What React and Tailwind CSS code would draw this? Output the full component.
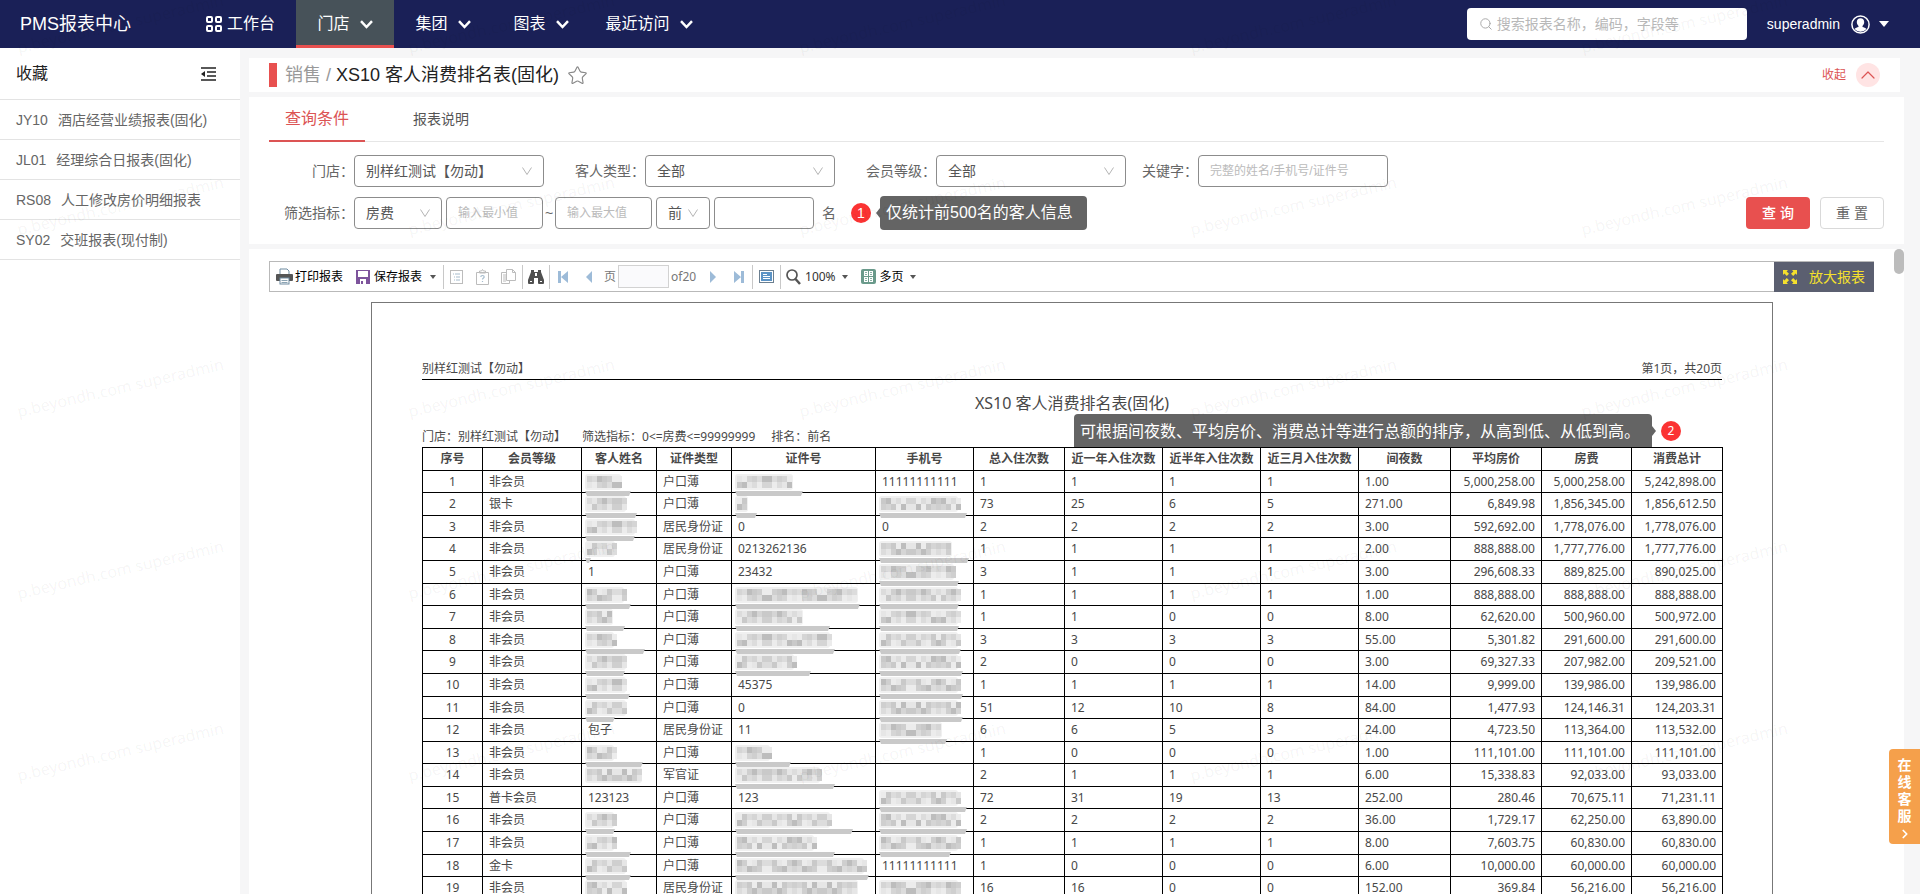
import { useState } from 'react';
import { ChevronDown, ChevronUp, Search, Star } from 'lucide-react';

const navItems = [
  { label: '门店', width: 'w-[98px]' },
  { label: '集团', width: 'w-[98px]' },
  { label: '图表', width: 'w-[98px]' },
  { label: '最近访问', width: 'w-[118px]' },
];

const favorites = [
  { code: 'JY10', name: '酒店经营业绩报表(固化)' },
  { code: 'JL01', name: '经理综合日报表(固化)' },
  { code: 'RS08', name: '人工修改房价明细报表' },
  { code: 'SY02', name: '交班报表(现付制)' },
];

const columns = [
  { title: '序号', width: 'w-[60px]', align: 'text-center' },
  { title: '会员等级', width: 'w-[99px]', align: 'text-left' },
  { title: '客人姓名', width: 'w-[75px]', align: 'text-left' },
  { title: '证件类型', width: 'w-[75px]', align: 'text-left' },
  { title: '证件号', width: 'w-[144px]', align: 'text-left' },
  { title: '手机号', width: 'w-[98px]', align: 'text-left' },
  { title: '总入住次数', width: 'w-[91px]', align: 'text-left' },
  { title: '近一年入住次数', width: 'w-[98px]', align: 'text-left' },
  { title: '近半年入住次数', width: 'w-[98px]', align: 'text-left' },
  { title: '近三月入住次数', width: 'w-[98px]', align: 'text-left' },
  { title: '间夜数', width: 'w-[92px]', align: 'text-left' },
  { title: '平均房价', width: 'w-[91px]', align: 'text-right' },
  { title: '房费', width: 'w-[90px]', align: 'text-right' },
  { title: '消费总计', width: 'w-[91px]', align: 'text-right' },
];

// [blurred text width, smear width] hides private data in a cell
const rows = [
  ['1', '非会员', [33, 46], '户口薄', [55, 68], '11111111111', '1', '1', '1', '1', '1.00', '5,000,258.00', '5,000,258.00', '5,242,898.00'],
  ['2', '银卡', [38, 52], '户口薄', [10, 22], [76, 88], '73', '25', '6', '5', '271.00', '6,849.98', '1,856,345.00', '1,856,612.50'],
  ['3', '非会员', [47, 50], '居民身份证', '0', '0', '2', '2', '2', '2', '3.00', '592,692.00', '1,778,076.00', '1,778,076.00'],
  ['4', '非会员', [27, 6], '居民身份证', '0213262136', [70, 90], '1', '1', '1', '1', '2.00', '888,888.00', '1,777,776.00', '1,777,776.00'],
  ['5', '非会员', '1', '户口薄', '23432', [72, 80], '3', '1', '1', '1', '3.00', '296,608.33', '889,825.00', '890,025.00'],
  ['6', '非会员', [36, 46], '户口薄', [120, 125], [76, 80], '1', '1', '1', '1', '1.00', '888,888.00', '888,888.00', '888,888.00'],
  ['7', '非会员', [25, 40], '户口薄', [65, 95], [76, 80], '1', '1', '0', '0', '8.00', '62,620.00', '500,960.00', '500,972.00'],
  ['8', '非会员', [26, 60], '户口薄', [92, 100], [76, 82], '3', '3', '3', '3', '55.00', '5,301.82', '291,600.00', '291,600.00'],
  ['9', '非会员', [38, 40], '户口薄', [56, 76], [76, 84], '2', '0', '0', '0', '3.00', '69,327.33', '207,982.00', '209,521.00'],
  ['10', '非会员', [38, 45], '户口薄', '45375', [76, 84], '1', '1', '1', '1', '14.00', '9,999.00', '139,986.00', '139,986.00'],
  ['11', '非会员', [38, 30], '户口薄', '0', [76, 84], '51', '12', '10', '8', '84.00', '1,477.93', '124,146.31', '124,203.31'],
  ['12', '非会员', '包子', '居民身份证', '11', [60, 68], '6', '6', '5', '3', '24.00', '4,723.50', '113,364.00', '113,532.00'],
  ['13', '非会员', [26, 58], '户口薄', [32, 56], '', '1', '0', '0', '0', '1.00', '111,101.00', '111,101.00', '111,101.00'],
  ['14', '非会员', [54, 0], '军官证', [82, 100], '', '2', '1', '1', '1', '6.00', '15,338.83', '92,033.00', '93,033.00'],
  ['15', '普卡会员', '123123', '户口薄', '123', [76, 88], '72', '31', '19', '13', '252.00', '280.46', '70,675.11', '71,231.11'],
  ['16', '非会员', [26, 30], '户口薄', [92, 118], [76, 88], '2', '2', '2', '2', '36.00', '1,729.17', '62,250.00', '63,890.00'],
  ['17', '非会员', [26, 46], '户口薄', [76, 100], [76, 72], '1', '1', '1', '1', '8.00', '7,603.75', '60,830.00', '60,830.00'],
  ['18', '金卡', [38, 46], '户口薄', [126, 134], '11111111111', '1', '0', '0', '0', '6.00', '10,000.00', '60,000.00', '60,000.00'],
  ['19', '非会员', [38, 0], '居民身份证', [120, 0], [76, 0], '16', '16', '0', '0', '152.00', '369.84', '56,216.00', '56,216.00'],
];

const shortRows = ['1', '3', '6', '8', '11', '13', '15', '18'];
const greys = ['#c9c9c9', '#e6e6e6', '#d5d5d5', '#bdbdbd', '#ececec', '#dcdcdc', '#cfcfcf'];

function Mosaic({ width, smear, seed }) {
  const blocks = [];
  for (let x = 0; x < width; x += 5) {
    for (let y = 0; y < 2; y++) {
      const n = (x * 7 + y * 13 + seed * 31 + ((x * x) % 11)) % greys.length;
      blocks.push(<rect key={`${x}-${y}`} x={x + 2} y={5 + y * 6} width="5" height="6" fill={greys[n]} />);
    }
  }
  return (
    <svg className="absolute left-[3px] top-0 z-10" width="140" height="26" viewBox="0 0 140 26" aria-hidden="true">
      <rect x="0" y="3" width={width + 3} height="16" rx="3" fill="#f0f0f0" />
      {blocks}
      {smear > 0 && <path d={`M0 20h${smear}l-2 5H2z`} fill="#c9c9c9" />}
    </svg>
  );
}

function SelectBox({ id, label, value, className }) {
  return (
    <span className={`relative inline-flex h-8 ${className}`}>
      <select id={id} aria-label={label} className="h-8 w-full appearance-none rounded border border-[#8c8c8c] bg-white pl-[11px] text-sm text-[#555] outline-none">
        <option>{value}</option>
      </select>
      <svg className="pointer-events-none absolute right-3 top-3 text-[#b4b4b4]" width="10" height="9" viewBox="0 0 10 9" fill="none" stroke="currentColor">
        <path d="M.5.5 5 7.500 9.500.5" />
      </svg>
    </span>
  );
}

function Caret({ className }) {
  return (
    <svg className={className} width="6" height="4" viewBox="0 0 6 4" fill="#555"><path d="M0 0h6L3 4z" /></svg>
  );
}

function Divider({ className }) {
  return <span className={`h-6 w-px shrink-0 bg-[#c8c8c8] ${className}`} />;
}

function Header() {
  const [active, setActive] = useState('门店');
  return (
    <header className="flex h-12 shrink-0 items-center bg-[#1a2057] text-white">
      <h1 className="w-[186px] pl-5 text-lg">PMS报表中心</h1>
      <nav className="flex h-full items-center text-base">
        <a href="#workbench" className="flex w-[110px] items-center gap-[5px] pl-5">
          <svg width="16" height="16" viewBox="0 0 16 16" fill="none" stroke="currentColor" strokeWidth="2">
            <rect x="1" y="1" width="5" height="5" rx="1" />
            <rect x="10" y="1" width="5" height="5" rx="1" />
            <rect x="1" y="10" width="5" height="5" rx="1" />
            <rect x="10" y="10" width="5" height="5" rx="1" />
          </svg>
          工作台
        </a>
        {navItems.map((item) => (
          <button
            key={item.label}
            onClick={() => setActive(item.label)}
            className={`flex h-full items-center justify-center gap-[10px] border-b-[3px] pt-[3px] ${item.width} ${
              active === item.label ? 'border-[#e8504f] bg-[#475259]' : 'border-transparent'
            }`}
          >
            {item.label}
            <svg width="13" height="9" viewBox="0 0 13 9" fill="none" stroke="currentColor" strokeWidth="2.500">
              <path d="M1 1.200 6.500 7 12 1.200" />
            </svg>
          </button>
        ))}
      </nav>
      <div className="ml-auto flex items-center pr-[31px]">
        <label className="flex h-8 w-[280px] items-center gap-1 rounded bg-white pl-3 text-[#aaa]">
          <Search size={14} strokeWidth={1.7} />
          <input aria-label="搜索报表" placeholder="搜索报表名称，编码，字段等" className="flex-1 text-sm outline-none placeholder:text-[#b8b8b8]" />
        </label>
        <button className="ml-5 flex items-center text-sm">
          superadmin
          <svg className="ml-[11px]" width="19" height="19" viewBox="0 0 19 19">
            <circle cx="9.5" cy="9.5" r="8.6" fill="none" stroke="#fff" strokeWidth="1.5" />
            <path d="M9.5 3.2c-2.3 0-3.7 1.7-3.7 3.9 0 1.6.7 3 1.7 3.8v1.2c-1.4.5-3 .9-4 2a8.2 8.2 0 0 0 12 0c-1-1.1-2.6-1.5-4-2v-1.2c1-.8 1.7-2.2 1.7-3.8 0-2.2-1.4-3.9-3.7-3.900z" fill="#fff" />
          </svg>
          <svg className="ml-[9px]" width="10" height="6" viewBox="0 0 10 6" fill="#fff"><path d="M0 0h10L5 6z" /></svg>
        </button>
      </div>
    </header>
  );
}

function Sidebar() {
  return (
    <aside className="w-60 shrink-0 bg-white">
      <div className="flex h-[52px] items-center justify-between border-b border-[#e3e3e3] pl-4 pr-6">
        <h2 className="text-base text-[#222]">收藏</h2>
        <button aria-label="收起收藏">
          <svg width="15" height="14" viewBox="0 0 15 14" fill="none" stroke="#222" strokeWidth="1.500">
            <path d="M0 1h15M6 5h9M6 9h9M0 13h15" />
            <path d="M4 4v6L0 7z" fill="#222" stroke="none" />
          </svg>
        </button>
      </div>
      <ul>
        {favorites.map((item) => (
          <li key={item.code} className="h-10 border-b border-[#e3e3e3]">
            <a href={`#${item.code}`} className="flex h-full items-center gap-[10px] pl-4 text-sm text-[#666]">
              <span>{item.code}</span>
              <span>{item.name}</span>
            </a>
          </li>
        ))}
      </ul>
    </aside>
  );
}

function TitleBar() {
  return (
    <div className="mr-1 flex h-[34px] shrink-0 items-center bg-white px-5">
      <span className="h-6 w-2 bg-[#e8504f]" />
      <div className="ml-2 flex items-center gap-[5px] text-lg text-[#222]">
        <span className="text-[#999]">销售</span>
        <span className="text-[#999]">/</span>
        <span>XS10 客人消费排名表(固化)</span>
      </div>
      <button aria-label="收藏报表" className="ml-2 text-[#888]"><Star size={21} strokeWidth={1.3} strokeLinejoin="miter" /></button>
      <button className="ml-auto flex items-center gap-[10px] text-xs text-[#dc5454]">
        收起
        <span className="flex h-6 w-6 items-center justify-center rounded-full bg-[#ffe4e4]">
          <ChevronUp size={24} strokeWidth={1.2} />
        </span>
      </button>
    </div>
  );
}

function Filters() {
  const field = 'h-8 rounded border border-[#8c8c8c] bg-white pl-[11px] text-xs outline-none placeholder:text-[#bbb]';
  return (
    <section className="shrink-0 bg-white pb-[15px]">
      <div className="mx-5 flex h-[45px] border-b border-[#e6e6e6]" role="tablist">
        <button role="tab" aria-selected="true" className="-mb-px h-[45px] border-b-2 border-[#dc5454] px-4 text-base text-[#dc5454]">查询条件</button>
        <button role="tab" aria-selected="false" className="ml-8 h-[43px] px-4 text-sm text-[#555]">报表说明</button>
      </div>
      <form className="mt-[13px] flex flex-col gap-[10px] pr-5 text-sm text-[#666]" onSubmit={(e) => e.preventDefault()}>
        <div className="flex items-center">
          <label htmlFor="store" className="w-[105px] text-right">门店：</label>
          <SelectBox id="store" value="别样红测试【勿动】" className="w-[190px]" />
          <label htmlFor="guest" className="w-[101px] text-right">客人类型：</label>
          <SelectBox id="guest" value="全部" className="w-[190px]" />
          <label htmlFor="level" className="w-[101px] text-right">会员等级：</label>
          <SelectBox id="level" value="全部" className="w-[190px]" />
          <label htmlFor="keyword" className="w-[72px] text-right">关键字：</label>
          <input id="keyword" placeholder="完整的姓名/手机号/证件号" className={`w-[190px] ${field}`} />
        </div>
        <div className="flex items-center">
          <label htmlFor="metric" className="w-[105px] text-right">筛选指标：</label>
          <SelectBox id="metric" value="房费" className="w-[88px]" />
          <input aria-label="最小值" placeholder="输入最小值" className={`ml-1 w-[97px] ${field}`} />
          <span className="w-3 text-center">~</span>
          <input aria-label="最大值" placeholder="输入最大值" className={`w-[97px] ${field}`} />
          <SelectBox id="order" label="排名方向" value="前" className="ml-1 w-[54px]" />
          <input aria-label="名次" className={`ml-1 w-[100px] ${field}`} />
          <span className="ml-2">名</span>
          <span className="ml-[15px] flex h-5 w-5 items-center justify-center rounded-full bg-[#fb3333] text-sm text-white">1</span>
          <svg className="ml-[5px]" width="4" height="10" viewBox="0 0 4 10" fill="#646464"><path d="M4 0v10L0 5z" /></svg>
          <span className="-my-px flex h-[34px] w-[207px] items-center whitespace-nowrap rounded bg-[#646464] pl-[6px] text-base text-white">仅统计前500名的客人信息</span>
          <button type="submit" className="ml-auto h-8 w-16 rounded bg-[#e8504f] text-sm font-medium text-white">查 询</button>
          <button type="reset" className="ml-[10px] h-8 w-16 rounded border border-[#d9d9d9] bg-white text-sm text-[#666]">重 置</button>
        </div>
      </form>
    </section>
  );
}

function Toolbar() {
  return (
    <div className="ml-5 mr-[30px] flex h-[31px] items-center border border-[#b9b9b9] bg-white pl-[6px] font-['Noto_Sans','Noto_Sans_CJK_SC',sans-serif] text-xs text-black">
      <button className="flex w-[67px] items-center gap-[2px] whitespace-nowrap">
        <svg width="17" height="17" viewBox="0 0 17 17">
          <path d="M4 1h7l2 2v4H4z" fill="#fff" stroke="#6d8ba0" />
          <rect x="0" y="6" width="17" height="7" rx="1" fill="#555" />
          <rect x="4" y="10" width="9" height="6" fill="#fff" stroke="#6d8ba0" />
          <path d="M5.5 12.5h6M5.5 14.5h6" stroke="#6d8ba0" strokeWidth=".8" />
        </svg>
        打印报表
      </button>
      <button className="ml-[13px] flex items-center gap-1 whitespace-nowrap">
        <svg width="14" height="14" viewBox="0 0 14 14">
          <path d="M0 0h14v14H0z" fill="#7d549c" />
          <path d="M2 1h10v6H2zM4 9h6v5H4z" fill="#fff" />
          <path d="M5 11h2v3H5z" fill="#7d549c" />
        </svg>
        保存报表
        <Caret className="ml-1" />
      </button>
      <Divider className="ml-[7px]" />
      <button aria-label="目录" className="ml-[6px]">
        <svg width="13" height="14" viewBox="0 0 13 14" fill="none" stroke="#bcbcbc">
          <rect x=".5" y=".5" width="12" height="13" />
          <path d="M3 4h1M5 4h5M4 7h1M6 7h4M4 10h1M6 10h4" stroke="#a6bccd" />
        </svg>
      </button>
      <button aria-label="参数" className="ml-[13px]">
        <svg width="13" height="16" viewBox="0 0 13 16" fill="none" stroke="#bcbcbc">
          <path d="M.5 3.5h12v12H.5zM3.5 4V2h2l1-1.5L7.5 2h2v2z" />
          <path d="M4.800 8c0-2 3.400-2 3.400 0 0 1-1.700 1.200-1.700 2.500M6.500 12v1" stroke="#a6bccd" strokeWidth="1.2" />
        </svg>
      </button>
      <button aria-label="复制" className="ml-3">
        <svg width="15" height="15" viewBox="0 0 15 15" fill="#fff" stroke="#bcbcbc">
          <path d="M.5 3.5h8v11h-8zM2 6h3M2 8h3M2 10h3M2 12h3" />
          <path d="M5.5.5h6l3 3v8h-9zM11.500.5v3h3" />
        </svg>
      </button>
      <Divider className="ml-[6px]" />
      <button aria-label="查找" className="ml-[5px]">
        <svg width="16" height="14" viewBox="0 0 16 14" fill="#505050">
          <path d="M3 0h3v2h4V0h3v2l3 8v3a1 1 0 0 1-1 1h-4a1 1 0 0 1-1-1V8H6v5a1 1 0 0 1-1 1H1a1 1 0 0 1-1-1v-3l3-8z" />
          <path d="M7 3h2v3H7zM2 11h2v1H2zM12 11h2v1h-2z" fill="#fff" />
        </svg>
      </button>
      <Divider className="ml-[5px]" />
      <button aria-label="第一页" className="ml-2">
        <svg width="10" height="12" viewBox="0 0 10 12" fill="#9dbbd8"><path d="M0 0h3v12H0zM10 0v12L3 6z" /></svg>
      </button>
      <button aria-label="上一页" className="ml-[18px]">
        <svg width="6" height="12" viewBox="0 0 6 12" fill="#9dbbd8"><path d="M6 0v12L0 6z" /></svg>
      </button>
      <label htmlFor="page" className="ml-3 text-[#777]">页</label>
      <input id="page" className="ml-[2px] h-[23px] w-[51px] border border-[#d2d2d2] bg-[#fafafc] outline-none" />
      <span className="ml-[2px] w-[27px] whitespace-nowrap text-[#777]">of20</span>
      <button aria-label="下一页" className="ml-3">
        <svg width="6" height="12" viewBox="0 0 6 12" fill="#9dbbd8"><path d="M0 0v12l6-6z" /></svg>
      </button>
      <button aria-label="最后一页" className="ml-[18px]">
        <svg width="10" height="12" viewBox="0 0 10 12" fill="#9dbbd8"><path d="M7 0h3v12H7zM0 0v12l7-6z" /></svg>
      </button>
      <Divider className="ml-2" />
      <button aria-label="全屏" className="ml-[6px]">
        <svg width="15" height="13" viewBox="0 0 15 13">
          <rect x=".5" y=".5" width="14" height="12" fill="#fff" stroke="#6b7f90" />
          <rect x="2" y="2" width="11" height="9" fill="#5b93c5" />
          <path d="M4 4.500h4M4 6.500h7M4 8.500h7" stroke="#fff" />
        </svg>
      </button>
      <Divider className="ml-[6px]" />
      <button className="ml-[5px] flex items-center gap-1 text-[#333]">
        <svg width="15" height="16" viewBox="0 0 15 16" fill="none" stroke="#555">
          <circle cx="6" cy="6" r="5" strokeWidth="1.7" />
          <path d="M9.5 10l4.500 5" strokeWidth="2.5" />
        </svg>
        100%
        <Caret className="ml-[2px]" />
      </button>
      <button className="ml-[13px] flex items-center gap-1">
        <svg width="15" height="15" viewBox="0 0 15 15">
          <rect width="15" height="15" rx="2" fill="#6a9a8b" />
          <path d="M3 2h4v5H3zM8 2h4v5H8zM3 8h4v5H3zM8 8h4v5H8z" fill="#fff" />
          <path d="M4 3.5h2M4 5.5h2M9 3.5h2M9 5.5h2M4 9.5h2M4 11.5h2M9 9.5h2M9 11.5h2" stroke="#6a9a8b" strokeWidth=".8" />
        </svg>
        多页
        <Caret className="ml-[2px]" />
      </button>
      <button className="-my-px -mr-px ml-auto flex h-[30px] w-[100px] items-center gap-3 whitespace-nowrap bg-[#5b5f70] pl-[9px] text-sm text-[#f5e02c]">
        <svg width="14" height="14" viewBox="0 0 14 14" fill="currentColor">
          <path d="M0 0h5L3.6 1.4 6 3.8 3.8 6 1.4 3.6 0 5zM14 0v5l-1.4-1.4L10.200 6 8 3.800l2.400-2.400L9 0zM0 14V9l1.400 1.400L3.800 8 6 10.200l-2.400 2.400L5 14zM14 14H9l1.400-1.400L8 10.200 10.200 8l2.400 2.400L14 9z" />
        </svg>
        放大报表
      </button>
    </div>
  );
}

function Report() {
  return (
    <article className="mx-auto mt-[10px] w-full max-w-[1402px] border border-[#777] bg-white px-[50px] pt-14 font-['Noto_Sans','Noto_Sans_CJK_SC',sans-serif] text-xs text-[#484848]">
      <div className="flex h-[21px] items-center justify-between border-b border-black">
        <span>别样红测试【勿动】</span>
        <span>第1页，共20页</span>
      </div>
      <h2 className="mt-[11px] text-center text-base leading-6">XS10 客人消费排名表(固化)</h2>
      <div className="relative mt-3 flex h-5 items-center gap-4">
        <span>门店：别样红测试【勿动】</span>
        <span>筛选指标：0&lt;=房费&lt;=99999999</span>
        <span>排名：前名</span>
        <div className="absolute bottom-0 right-[41px] flex items-center">
          <span className="flex h-[33px] w-[578px] items-center whitespace-nowrap rounded-t bg-[#646464] pl-[6px] text-base text-white">
            可根据间夜数、平均房价、消费总计等进行总额的排序，从高到低、从低到高。
          </span>
          <svg width="4" height="10" viewBox="0 0 4 10" fill="#646464"><path d="M0 0v10l4-5z" /></svg>
          <span className="ml-[5px] flex h-5 w-5 items-center justify-center rounded-full bg-[#fb3333] text-xs text-white">2</span>
        </div>
      </div>
      <table className="w-full table-fixed border-collapse">
        <thead>
          <tr className="h-[23px]">
            {columns.map((col) => (
              <th key={col.title} className={`whitespace-nowrap border border-black p-0 font-bold leading-4 ${col.width}`}>{col.title}</th>
            ))}
          </tr>
        </thead>
        <tbody>
          {rows.map((row) => (
            <tr key={row[0]} className={shortRows.includes(row[0]) ? 'h-[22px]' : 'h-[23px]'}>
              {row.map((cell, i) => (
                <td key={i} className={`relative whitespace-nowrap border border-black py-0 leading-4 ${i === 0 ? 'px-0' : 'px-[6px]'} ${columns[i].align}`}>
                  {Array.isArray(cell) ? <Mosaic width={cell[0]} smear={cell[1]} seed={Number(row[0]) + i} /> : cell}
                </td>
              ))}
            </tr>
          ))}
        </tbody>
      </table>
    </article>
  );
}

function Watermark() {
  return (
    <div aria-hidden="true" className="pointer-events-none absolute inset-0 z-20 overflow-hidden">
      <div className="-mt-[123px] ml-5 grid auto-rows-[182px] grid-cols-[repeat(5,391px)]">
        {Array.from({ length: 25 }, (_, i) => (
          <span key={i} className="origin-bottom-left -rotate-[13deg] self-end whitespace-nowrap font-['Noto_Sans',sans-serif] text-base text-black/5">
            p.beyondh.com superadmin
          </span>
        ))}
      </div>
    </div>
  );
}

export default function App() {
  return (
    <div lang="zh-CN" className="relative flex h-screen flex-col overflow-hidden bg-[#f6f6f7] font-['Liberation_Sans','Noto_Sans_CJK_SC',sans-serif]">
      <Header />
      <div className="flex min-h-0 flex-1">
        <Sidebar />
        <main className="flex min-w-0 flex-1 flex-col gap-[5px] pl-[9px] pr-4 pt-[10px]">
          <TitleBar />
          <Filters />
          <section className="relative min-h-0 flex-1 overflow-hidden bg-white pt-3">
            <Toolbar />
            <div className="ml-5 mr-[29px]">
              <Report />
            </div>
            <span className="absolute right-0 top-0 h-[25px] w-[10px] rounded-full bg-[#bcbcbc]" />
          </section>
        </main>
      </div>
      <button className="absolute bottom-[50px] right-0 z-30 flex h-[95px] w-[31px] flex-col items-center rounded-l bg-[#f5a04b] pt-2 text-sm font-bold leading-[17px] text-white">
        <span>在</span>
        <span>线</span>
        <span>客</span>
        <span>服</span>
        <ChevronDown className="mt-[2px] -rotate-90" size={14} strokeWidth={3} />
      </button>
      <Watermark />
    </div>
  );
}
